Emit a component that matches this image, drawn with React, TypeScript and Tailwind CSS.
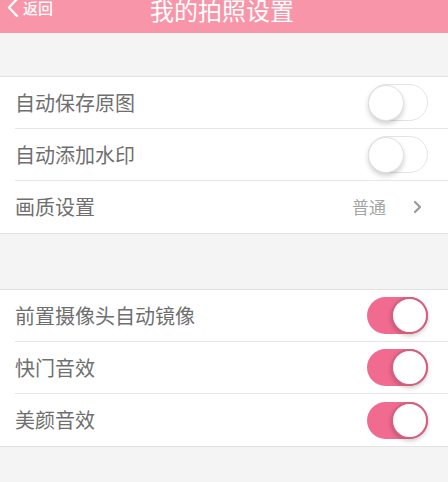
import { useState } from "react";

type Row = {
  label: string;
  kind: "toggle" | "link";
  on?: boolean;
  value?: string;
};

const groups: Row[][] = [
  [
    { label: "自动保存原图", kind: "toggle", on: false },
    { label: "自动添加水印", kind: "toggle", on: false },
    { label: "画质设置", kind: "link", value: "普通" },
  ],
  [
    { label: "前置摄像头自动镜像", kind: "toggle", on: true },
    { label: "快门音效", kind: "toggle", on: true },
    { label: "美颜音效", kind: "toggle", on: true },
  ],
];

function Toggle({ initial }: { initial: boolean }) {
  const [on, setOn] = useState(initial);
  return (
    <button
      onClick={() => setOn(!on)}
      className={
        on
          ? "relative w-[61px] h-[37px] rounded-full bg-[#f06b8f] flex items-center justify-end"
          : "relative w-[60px] h-[37px] rounded-full bg-white border border-[#e4e4e4] flex items-center justify-start"
      }
    >
      <span
        className={
          on
            ? "w-[37px] h-[37px] rounded-full bg-white border-2 border-[#d55f7e] shadow-[0_2px_4px_rgba(0,0,0,0.2)]"
            : "w-[36px] h-[36px] -ml-px rounded-full bg-white border border-[#e0e0e0] shadow-[0_3px_5px_rgba(0,0,0,0.18)]"
        }
      />
    </button>
  );
}

export default function App() {
  return (
    <div
      className="w-[448px] h-[482px] overflow-hidden bg-[#f4f4f4]"
      style={{ fontFamily: '"Noto Sans CJK SC", "Noto Sans", sans-serif' }}
    >
      {/* Header */}
      <div className="relative h-[33px] bg-[#f895a8] flex items-start justify-center">
        <div className="absolute left-[6px] top-0 flex items-center h-[18px] text-white">
          <svg width="14" height="20" viewBox="0 0 14 20" className="-mt-[2px]">
            <path d="M11 1 L3 9.5 L11 18" fill="none" stroke="white" strokeWidth="2.4" strokeLinecap="round" strokeLinejoin="round" />
          </svg>
          <span className="ml-[3px] text-[15px] leading-[18px] -mt-[2px] font-medium">返回</span>
        </div>
        <h1 className="text-[24px] leading-[20px] text-white -ml-[4px]">我的拍照设置</h1>
      </div>

      <div className="h-[43px]" />

      {groups.map((rows, gi) => (
        <div key={gi} className={gi > 0 ? "mt-[55px]" : ""}>
          <div className="bg-white border-t border-b border-[#e2e2e2]">
            {rows.map((r, i) => (
              <div key={r.label} className="pl-[15px]">
                <div
                  className={
                    "h-[52px] flex items-center justify-between pr-[20px] " +
                    (i < rows.length - 1 ? "border-b border-[#e6e6e6]" : "")
                  }
                >
                  <span className="text-[20px] text-[#6f6f6f]">{r.label}</span>
                  {r.kind === "toggle" ? (
                    <Toggle initial={!!r.on} />
                  ) : (
                    <div className="flex items-center">
                      <span className="text-[17px] text-[#a5a5a5]">{r.value}</span>
                      <svg width="10" height="14" viewBox="0 0 10 14" className="ml-[26px] mr-[6px]">
                        <path d="M3 2 L8 7 L3 12" fill="none" stroke="#9a9a9a" strokeWidth="2.2" strokeLinecap="round" strokeLinejoin="round" />
                      </svg>
                    </div>
                  )}
                </div>
              </div>
            ))}
          </div>
        </div>
      ))}
    </div>
  );
}
